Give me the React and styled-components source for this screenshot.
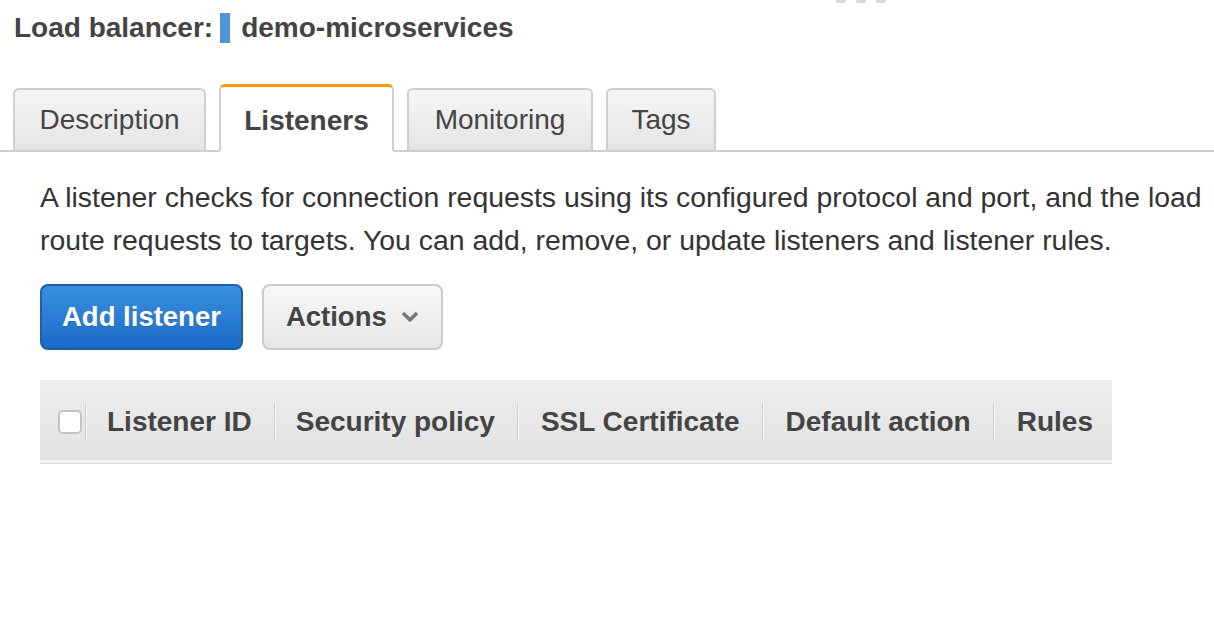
import styled, { createGlobalStyle } from 'styled-components';

const GlobalStyle = createGlobalStyle`
    html, body {
        margin: 0;
        padding: 0;
        background: #fff;
        overflow: hidden;
    }
    body {
        font-family: 'Liberation Sans', Arial, Helvetica, sans-serif;
        color: #444;
    }
`

const Page = styled.div`
    position: relative;
    width: 1214px;
    height: 632px;
    overflow: hidden;
    padding-top: 12px;
    box-sizing: border-box;
`

const Grip = styled.div`
    position: absolute;
    top: -2px;
    left: 836px;
    display: flex;
    gap: 10px;
    & span {
        width: 10px;
        height: 5px;
        border-radius: 3px;
        background: #d8d8d8;
    }
`

const Title = styled.h1`
    margin: 0 0 0 14px;
    display: flex;
    align-items: center;
    font-size: 28px;
    line-height: 32px;
    font-weight: bold;
    color: #444;
    white-space: nowrap;
`

const Marker = styled.span`
    display: inline-block;
    width: 10px;
    height: 30px;
    margin: 0 11px 0 7px;
    background: #5294d4;
`

const TabBar = styled.div`
    display: flex;
    align-items: flex-end;
    gap: 13px;
    height: 69px;
    padding-left: 13px;
    margin-top: 37px;
    border-bottom: 2px solid #cfcfcf;
`

const Tab = styled.div`
    box-sizing: border-box;
    width: ${p => p.w}px;
    height: ${p => (p.active ? 68 : 64)}px;
    margin-bottom: -2px;
    display: flex;
    align-items: center;
    justify-content: center;
    padding-top: ${p => (p.active ? 4 : 0)}px;
    font-size: 28px;
    font-weight: ${p => (p.active ? 'bold' : 'normal')};
    color: #444;
    border: 2px solid #cfcfcf;
    border-bottom: ${p => (p.active ? '2px solid #fff' : '2px solid #cfcfcf')};
    border-top: ${p => (p.active ? '3px solid #f90' : '2px solid #cfcfcf')};
    border-radius: 6px 6px 0 0;
    background: ${p => (p.active ? '#fff' : 'linear-gradient(#f6f6f6, #e4e4e4)')};
`

const Intro = styled.p`
    margin: 24px 0 0 40px;
    font-size: 28.4px;
    line-height: 43px;
    color: #333;
    white-space: nowrap;
`

const Toolbar = styled.div`
    display: flex;
    gap: 19px;
    margin: 22px 0 0 40px;
`

const Button = styled.button`
    box-sizing: border-box;
    height: 66px;
    padding: 0 ${p => (p.primary ? 20 : 22)}px;
    display: flex;
    align-items: center;
    gap: 14px;
    font-family: inherit;
    font-size: 27.5px;
    font-weight: bold;
    border-radius: 8px;
    color: ${p => (p.primary ? '#fff' : '#444')};
    border: 2px solid ${p => (p.primary ? '#1d5fae' : '#cacaca')};
    background: ${p => (p.primary
        ? 'linear-gradient(#3a90e0, #1a6bc6)'
        : 'linear-gradient(#f8f8f8, #e6e6e6)')};
    text-shadow: ${p => (p.primary ? '0 1px 0 rgba(0,0,0,0.15)' : '0 1px 0 #fff')};
`

const Table = styled.div`
    width: 1072px;
    margin: 30px 0 0 40px;
`

const HeaderRow = styled.div`
    box-sizing: border-box;
    height: 83px;
    display: flex;
    align-items: center;
    padding: 4px 0 0 18px;
    background: linear-gradient(#eeeeee, #e2e2e2);
    border-bottom: 3px solid #f1f1f1;
    box-shadow: 0 1px 0 #dcdcdc;
`

const Checkbox = styled.span`
    box-sizing: border-box;
    width: 24px;
    height: 24px;
    border: 2px solid #c4c4c4;
    border-radius: 5px;
    background: #fff;
    margin-right: 3px;
`

const Divider = styled.span`
    width: 1px;
    height: 38px;
    background: #cdcdcd;
    border-right: 1px solid #f8f8f8;
`

const HeadCell = styled.span`
    font-size: 28px;
    font-weight: bold;
    color: #444;
    padding: 0 ${p => p.pr}px 0 ${p => p.pl}px;
    white-space: nowrap;
`

const Chevron = () => (
    <svg width="18" height="12" viewBox="0 0 18 12">
        <polyline points="2,2 9,9 16,2" fill="none" stroke="#777" strokeWidth="3.5" strokeLinejoin="round" />
    </svg>
)

const tabs = [
    { label: 'Description', w: 193 },
    { label: 'Listeners', w: 175, active: true },
    { label: 'Monitoring', w: 186 },
    { label: 'Tags', w: 110 },
]

const columns = ['Listener ID', 'Security policy', 'SSL Certificate', 'Default action', 'Rules']

const App = () => {
    return (
        <Page>
            <GlobalStyle />
            <Grip><span /><span /><span /></Grip>
            <Title>
                Load balancer:<Marker />demo-microservices
            </Title>
            <TabBar>
                {tabs.map(t => (
                    <Tab key={t.label} w={t.w} active={t.active}>{t.label}</Tab>
                ))}
            </TabBar>
            <Intro>
                A listener checks for connection requests using its configured protocol and port, and the load
                <br />
                route requests to targets. You can add, remove, or update listeners and listener rules.
            </Intro>
            <Toolbar>
                <Button primary>Add listener</Button>
                <Button>Actions <Chevron /></Button>
            </Toolbar>
            <Table>
                <HeaderRow>
                    <Checkbox />
                    {columns.map((c, i) => (
                        <span key={c} style={{ display: 'contents' }}>
                            <Divider />
                            <HeadCell pl={i < 2 ? 20 : 22} pr={i === columns.length - 1 ? 0 : 22}>{c}</HeadCell>
                        </span>
                    ))}
                </HeaderRow>
            </Table>
        </Page>
    )
}

export default App;
